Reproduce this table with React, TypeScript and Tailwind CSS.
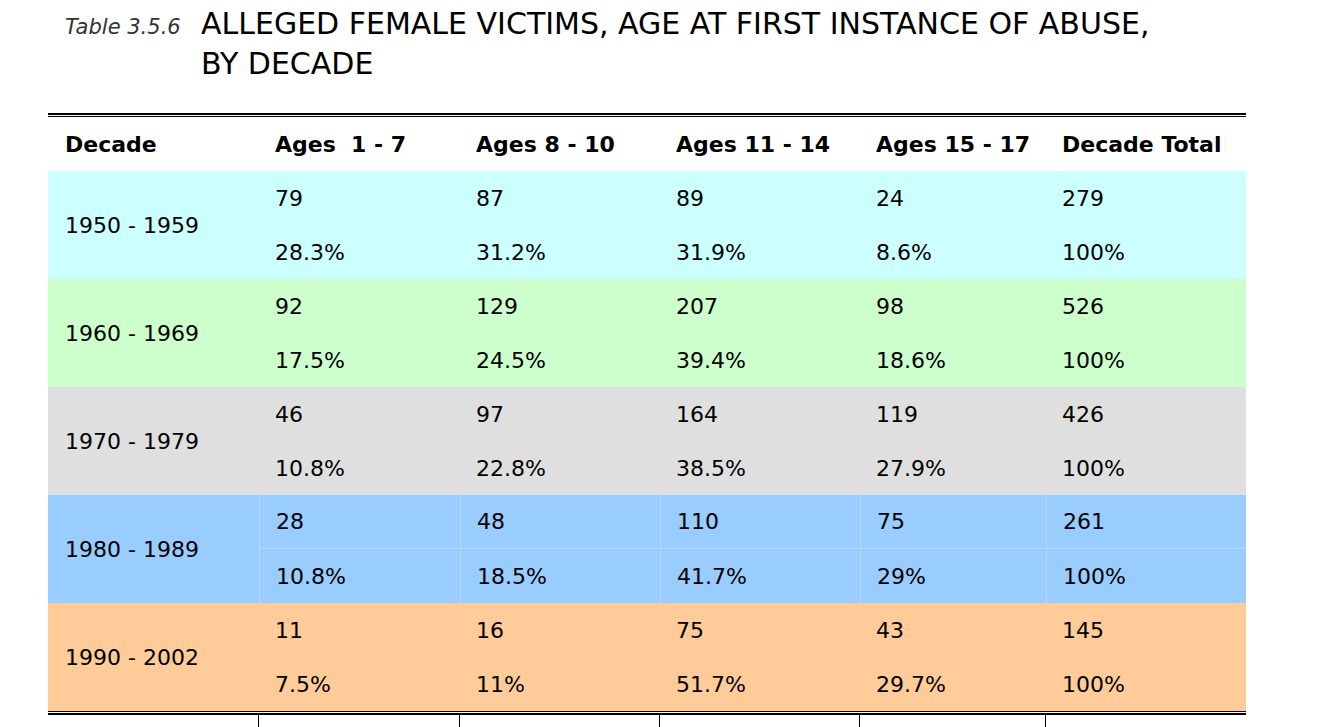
import React from 'react';

type Row = {
  decade: string;
  counts: string[];
  pcts: string[];
  bg: string;
  lines: boolean;
};

const rows: Row[] = [
  { decade: '1950 - 1959', counts: ['79', '87', '89', '24', '279'], pcts: ['28.3%', '31.2%', '31.9%', '8.6%', '100%'], bg: 'bg-[#ccffff]', lines: false },
  { decade: '1960 - 1969', counts: ['92', '129', '207', '98', '526'], pcts: ['17.5%', '24.5%', '39.4%', '18.6%', '100%'], bg: 'bg-[#ccffcc]', lines: false },
  { decade: '1970 - 1979', counts: ['46', '97', '164', '119', '426'], pcts: ['10.8%', '22.8%', '38.5%', '27.9%', '100%'], bg: 'bg-[#dfdfdf]', lines: false },
  { decade: '1980 - 1989', counts: ['28', '48', '110', '75', '261'], pcts: ['10.8%', '18.5%', '41.7%', '29%', '100%'], bg: 'bg-[#99ccff]', lines: true },
  { decade: '1990 - 2002', counts: ['11', '16', '75', '43', '145'], pcts: ['7.5%', '11%', '51.7%', '29.7%', '100%'], bg: 'bg-[#ffcc99]', lines: false },
];

const headers = ['Ages  1 - 7', 'Ages 8 - 10', 'Ages 11 - 14', 'Ages 15 - 17', 'Decade Total'];
const colW = ['w-[201px]', 'w-[200px]', 'w-[200px]', 'w-[186px]', 'w-[200px]'];

const DataRow = ({ row }: { row: Row }) => {
  const cell = (text: string, i: number, top: boolean) => (
    <div
      key={i}
      className={`${colW[i]} h-[54px] flex items-center pl-4 ${
        row.lines ? 'border-l border-[#b3d9ff]' : ''
      } ${row.lines && top ? 'border-b border-[#b3d9ff]' : ''}`}
    >
      {text}
    </div>
  );

  return (
    <div className={`flex ${row.bg}`}>
      <div className="w-[211px] h-[108px] flex items-center pl-[17px]">{row.decade}</div>
      <div className="flex flex-col">
        <div className="flex">{row.counts.map((c, i) => cell(c, i, true))}</div>
        <div className="flex">{row.pcts.map((p, i) => cell(p, i, false))}</div>
      </div>
    </div>
  );
};

export default function App() {
  return (
    <div className="w-[1332px] h-[727px] overflow-hidden bg-white text-black font-['DejaVu_Sans',sans-serif]">
      <div className="flex items-baseline pt-[4px] pl-[65px]">
        <div className="w-[136px] shrink-0 italic text-[21px] text-[#333]">Table 3.5.6</div>
        <h1 className="text-[30px] leading-[40px] font-normal">
          ALLEGED FEMALE VICTIMS, AGE AT FIRST INSTANCE OF ABUSE,
          <br />
          BY DECADE
        </h1>
      </div>

      <div className="ml-[48px] w-[1198px] mt-[29px] text-[22px]">
        <div className="h-[4px] border-t-2 border-b border-black" />
        <div className="flex h-[54px] items-center font-bold">
          <div className="w-[211px] pl-[17px]">Decade</div>
          {headers.map((h, i) => (
            <div key={h} className={`${colW[i]} pl-4 whitespace-pre`}>
              {h}
            </div>
          ))}
        </div>
        {rows.map((r) => (
          <DataRow key={r.decade} row={r} />
        ))}
        <div className="h-[4px] border-t border-b-2 border-black" />
        <div className="flex h-[20px]">
          <div className="w-[211px] border-r border-black" />
          <div className="w-[201px] border-r border-black" />
          <div className="w-[200px] border-r border-black" />
          <div className="w-[200px] border-r border-black" />
          <div className="w-[186px] border-r border-black" />
          <div className="w-[200px]" />
        </div>
      </div>
    </div>
  );
}
